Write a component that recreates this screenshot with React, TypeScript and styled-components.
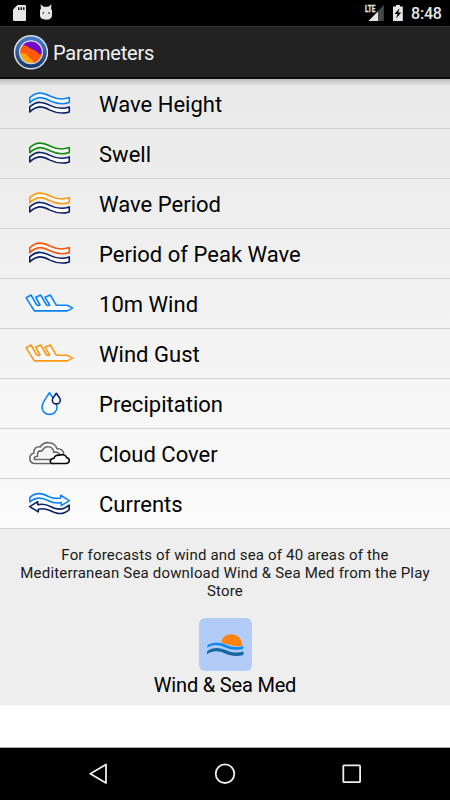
import React from 'react';
import styled, { createGlobalStyle } from 'styled-components';

const GlobalStyle = createGlobalStyle`
  body { margin: 0; background: #fff; font-family: Roboto, sans-serif; }
  svg { display: block; flex: none; }
`;

const Screen = styled.div`
  width: 450px;
  height: 800px;
  display: flex;
  flex-direction: column;
  overflow: hidden;
  background: #fff;
`;

const StatusBar = styled.header`
  height: 26px;
  flex: none;
  display: flex;
  justify-content: space-between;
  background: #000;
`;

const StatusRight = styled.div`
  display: flex;
`;

const Clock = styled.time`
  width: 39px;
  font-size: 16px;
  font-weight: 500;
  line-height: 28px;
  letter-spacing: -0.2px;
  color: #e8e8e8;
`;

const ActionBar = styled.div`
  height: 53px;
  box-sizing: border-box;
  flex: none;
  display: flex;
  padding-left: 13px;
  gap: 5px;
  background: #222;
  border-top: 1px solid #333;
  border-bottom: 2px solid #0b0b0b;
`;

const Title = styled.h1`
  margin: 0;
  font-size: 20px;
  font-weight: 400;
  line-height: 53px;
  letter-spacing: -0.18px;
  color: #f3f3f3;
`;

const List = styled.ul`
  margin: 0;
  padding: 0;
  list-style: none;
  flex: none;
  background: linear-gradient(#bdbdbd, rgba(200, 200, 200, 0) 7px), linear-gradient(#e9e9e9, #fbfbfb);
`;

const Row = styled.li`
  height: 50px;
  box-sizing: border-box;
  display: flex;
  padding-left: 15px;
  gap: 14px;
  border-bottom: 1px solid #d2d2d2;
`;

const Label = styled.span`
  font-size: 22px;
  line-height: 51px;
  letter-spacing: 0.02px;
  color: #000;
`;

const Promo = styled.section`
  height: 176px;
  box-sizing: border-box;
  flex: none;
  display: flex;
  flex-direction: column;
  align-items: center;
  padding-top: 17px;
  background: #eee;
`;

const PromoText = styled.p`
  margin: 0;
  width: 424px;
  font-size: 15px;
  line-height: 18px;
  letter-spacing: 0.18px;
  text-align: center;
  color: #1a1a1a;
`;

const AppTile = styled.div`
  width: 53px;
  height: 53px;
  margin-top: 18px;
  border-radius: 6px;
  background: #b2ccf7;
`;

const AppName = styled.span`
  font-size: 20px;
  line-height: 28px;
  letter-spacing: -0.18px;
  color: #000;
`;

const NavBar = styled.nav`
  height: 53px;
  box-sizing: border-box;
  margin-top: auto;
  flex: none;
  display: flex;
  justify-content: space-between;
  padding: 0 83px;
  border-top: 1px solid #aaa;
  background: #000;
`;

const NAVY = '#0b2268';
const BLUE = '#0c84f5';
const ribbon =
  'M14.8 13.6C22 7 28 8.7 35.5 12.3C43 16 48 15.8 54.3 13.6V18.6C48 20.6 43 20.6 35 16.8C27 12.6 22 11.8 14.8 18.7Z';

function IconFrame({ top, children }: { top: number; children: React.ReactNode }) {
  return (
    <svg width="70" height="49" viewBox={`0 ${-top} 70 49`} fill="none" strokeWidth="1.6" strokeLinejoin="round">
      {children}
    </svg>
  );
}

function Waves({ color }: { color: string }) {
  return (
    <IconFrame top={5}>
      <path d={ribbon} fill="#fff" stroke={color} />
      <path d={ribbon} transform="translate(0 9.3)" fill="#fff" stroke={NAVY} />
    </IconFrame>
  );
}

function Barb({ color }: { color: string }) {
  return (
    <IconFrame top={1}>
      <path
        d="M11.2 17.8L16 15L21.3 24.3Q22.8 26.3 25 25L20.8 17.3L25.7 15L31 24.3Q32.5 26.3 34.7 25L30 17.3L35.3 15L41.2 25.2H52.3L57.6 28.1L52.3 30.9H19.3Z"
        fill="#f7fbff"
        stroke={color}
      />
    </IconFrame>
  );
}

function Drops() {
  return (
    <IconFrame top={1}>
      <path d="M34.5 12.8C38.2 18.5 42 22.7 42 27.3A7.5 7.1 0 0 1 27 27.3C27 22.7 30.8 18.5 34.5 12.8Z" fill="#fff" stroke={BLUE} />
      <path d="M41.3 13.3C43.3 16.3 45.3 17.8 45.3 20.2A4 3.7 0 0 1 37.3 20.2C37.3 17.8 39.3 16.3 41.3 13.3Z" fill="#fff" stroke={NAVY} />
    </IconFrame>
  );
}

function Clouds() {
  return (
    <IconFrame top={1}>
      <path
        d="M40 33.5H20C16 33.5 14.8 31 14.8 28.3C14.8 25.5 16.5 23.8 18.8 23.3C18.3 19 21.5 16 25.3 17C27 13.8 30.5 12.3 34 12.7C38 13 41 15.3 42 18.7C46.5 18.5 49 21 48.7 25.2"
        fill="#fff"
        stroke="#666"
      />
      <path
        d="M41.5 29.5H20.5C18.5 29.3 18.5 26.3 22.5 26.3C22 22.5 23 20.4 27 21C28.5 17.8 30.5 16.5 33.2 16.7C36.5 16.8 38.5 19.2 38.8 22.3C42.5 21.6 44.5 23 44.8 25"
        fill="#f6f6f6"
        stroke="#666"
      />
      <path d="M37.5 33.5H51C55.2 33.3 55.2 28.2 51.8 27.7C51 24.8 47.3 24 44.2 25.2C41.3 24.8 39.3 26.2 39.2 28.3C34.5 28.8 34 33 37.5 33.5Z" stroke="#080808" fill="#fff" />
    </IconFrame>
  );
}

function Currents() {
  const arrow =
    'M14.8 17.6C21 11.8 27 13.2 34 16.7C38 18.5 42 18.7 45.7 18V15.3L54.3 20.6L46.3 25.6V22.5C41 23.8 37 22.7 33 20.5C26 16.8 20.5 17 14.8 22Z';
  return (
    <IconFrame top={1}>
      <path d={arrow} fill="#fff" stroke={BLUE} />
      <path d={arrow} transform="rotate(180 34.5 23.6)" fill="#fff" stroke={NAVY} />
    </IconFrame>
  );
}

const parameters: { label: string; icon: React.ReactNode }[] = [
  { label: 'Wave Height', icon: <Waves color={BLUE} /> },
  { label: 'Swell', icon: <Waves color="#168b12" /> },
  { label: 'Wave Period', icon: <Waves color="#ff9712" /> },
  { label: 'Period of Peak Wave', icon: <Waves color="#fc540b" /> },
  { label: '10m Wind', icon: <Barb color={BLUE} /> },
  { label: 'Wind Gust', icon: <Barb color="#ff9712" /> },
  { label: 'Precipitation', icon: <Drops /> },
  { label: 'Cloud Cover', icon: <Clouds /> },
  { label: 'Currents', icon: <Currents /> },
];

function NotificationIcons() {
  return (
    <svg width="60" height="26" viewBox="0 0 60 26" fill="#e6e6e6">
      <path d="M17.5 5H25Q26 5 26 6V20Q26 21 25 21H14Q13 21 13 20V9.5Z" />
      <path d="M18.8 7.2V10M21.3 7.2V10M23.8 7.2V10" stroke="#000" strokeWidth="1.3" />
      <path d="M40 10L41 8.5L40.5 4.2L43.7 6.7H48.3L51.5 4.2L51 8.5L52 10.5V15C52 18 50 19.7 46 19.7S40 18 40 15Z" />
      <circle cx="43.3" cy="13" r=".8" fill="#000" />
      <circle cx="49" cy="13" r=".8" fill="#000" />
    </svg>
  );
}

function SignalBattery() {
  return (
    <svg width="49" height="26" viewBox="362 0 49 26" fill="#e6e6e6">
      <path d="M383.8 5V21H368.5Z" fill="#484848" />
      <path d="M378 11.4V21H368.5Z" />
      <rect x="363" y="4" width="13" height="8.5" fill="#000" />
      <text x="365" y="12" fontSize="9.5" fontWeight="700" stroke="#e6e6e6" strokeWidth=".35" textLength="10.3" lengthAdjust="spacingAndGlyphs">LTE</text>
      <path d="M396 5H400V6.5H402.8V21H393V6.5H396Z" />
      <path d="M399.5 8.3L394.5 14H397.5L396 18.5L401.3 12.6H398.3Z" fill="#000" />
    </svg>
  );
}

function AppLogo() {
  return (
    <svg width="35" height="50" viewBox="13 27 35 50">
      <defs>
        <linearGradient id="ring" x1="0" y1="0" x2="0" y2="1">
          <stop stopColor="#4b82cc" />
          <stop offset="1" stopColor="#16366b" />
        </linearGradient>
        <clipPath id="disc"><circle cx="31" cy="52.3" r="11.3" /></clipPath>
      </defs>
      <circle cx="31" cy="52.3" r="16.5" fill="url(#ring)" stroke="#d6dbe1" strokeWidth="1.5" />
      <g clipPath="url(#disc)">
        <rect x="19" y="40" width="24" height="25" fill="#7209c8" />
        <path d="M19 47C23 44.5 26 45 29 47.5C32 50 35 49 38 53Q40 55 43 54V65H19Z" fill="#ff5a08" />
        <path d="M19 54C23 52 26 53 28 56C30 60 33 58 34 65H19Z" fill="#ffa409" />
      </g>
      <circle cx="31" cy="52.3" r="11.4" fill="none" stroke="#dce6f2" strokeWidth="1.1" />
    </svg>
  );
}

function SeaLogo() {
  return (
    <svg width="53" height="53" viewBox="0 0 53 53">
      <path d="M22 25.5C23 12.7 43 12.7 43.2 27.7Q38 30 31 27Z" fill="#ff820d" />
      <path d="M8 27C14 23.2 21 23.8 28 26.7C34 29.2 39 29.2 44.5 27.7V31.2C38 32.9 32 32.5 26 29.7C20 26.9 14 26.2 8 30.2Z" fill="#0b87f4" stroke="#d9e7fc" strokeWidth=".5" />
      <path d="M8 33.5C14 28.7 21 29.5 28 32.5C34 35 39 35 44.5 33.4V36.9C38 38.7 32 38.3 26 35.5C20 32.7 14 32 8 36.2Z" fill="#1767a5" />
    </svg>
  );
}

export default function App() {
  return (
    <Screen>
      <GlobalStyle />
      <StatusBar>
        <NotificationIcons />
        <StatusRight>
          <SignalBattery />
          <Clock>8:48</Clock>
        </StatusRight>
      </StatusBar>
      <ActionBar>
        <AppLogo />
        <Title>Parameters</Title>
      </ActionBar>
      <List>
        {parameters.map(({ label, icon }) => (
          <Row key={label}>
            {icon}
            <Label>{label}</Label>
          </Row>
        ))}
      </List>
      <Promo>
        <PromoText>
          For forecasts of wind and sea of 40 areas of the Mediterranean Sea download Wind &amp; Sea Med from the Play Store
        </PromoText>
        <AppTile><SeaLogo /></AppTile>
        <AppName>Wind &amp; Sea Med</AppName>
      </Promo>
      <NavBar>
        <svg width="30" height="52" viewBox="83 748 30 52" fill="none" stroke="#eee" strokeWidth="1.8">
          <path d="M106 764.5V783L90.3 773.8Z" strokeLinejoin="round" />
        </svg>
        <svg width="30" height="52" viewBox="210 748 30 52" fill="none" stroke="#eee" strokeWidth="1.8">
          <circle cx="225" cy="773.7" r="9.3" />
        </svg>
        <svg width="30" height="52" viewBox="337 748 30 52" fill="none" stroke="#eee" strokeWidth="1.8">
          <rect x="343.3" y="765.4" width="16.8" height="16.8" rx=".8" />
        </svg>
      </NavBar>
    </Screen>
  );
}
